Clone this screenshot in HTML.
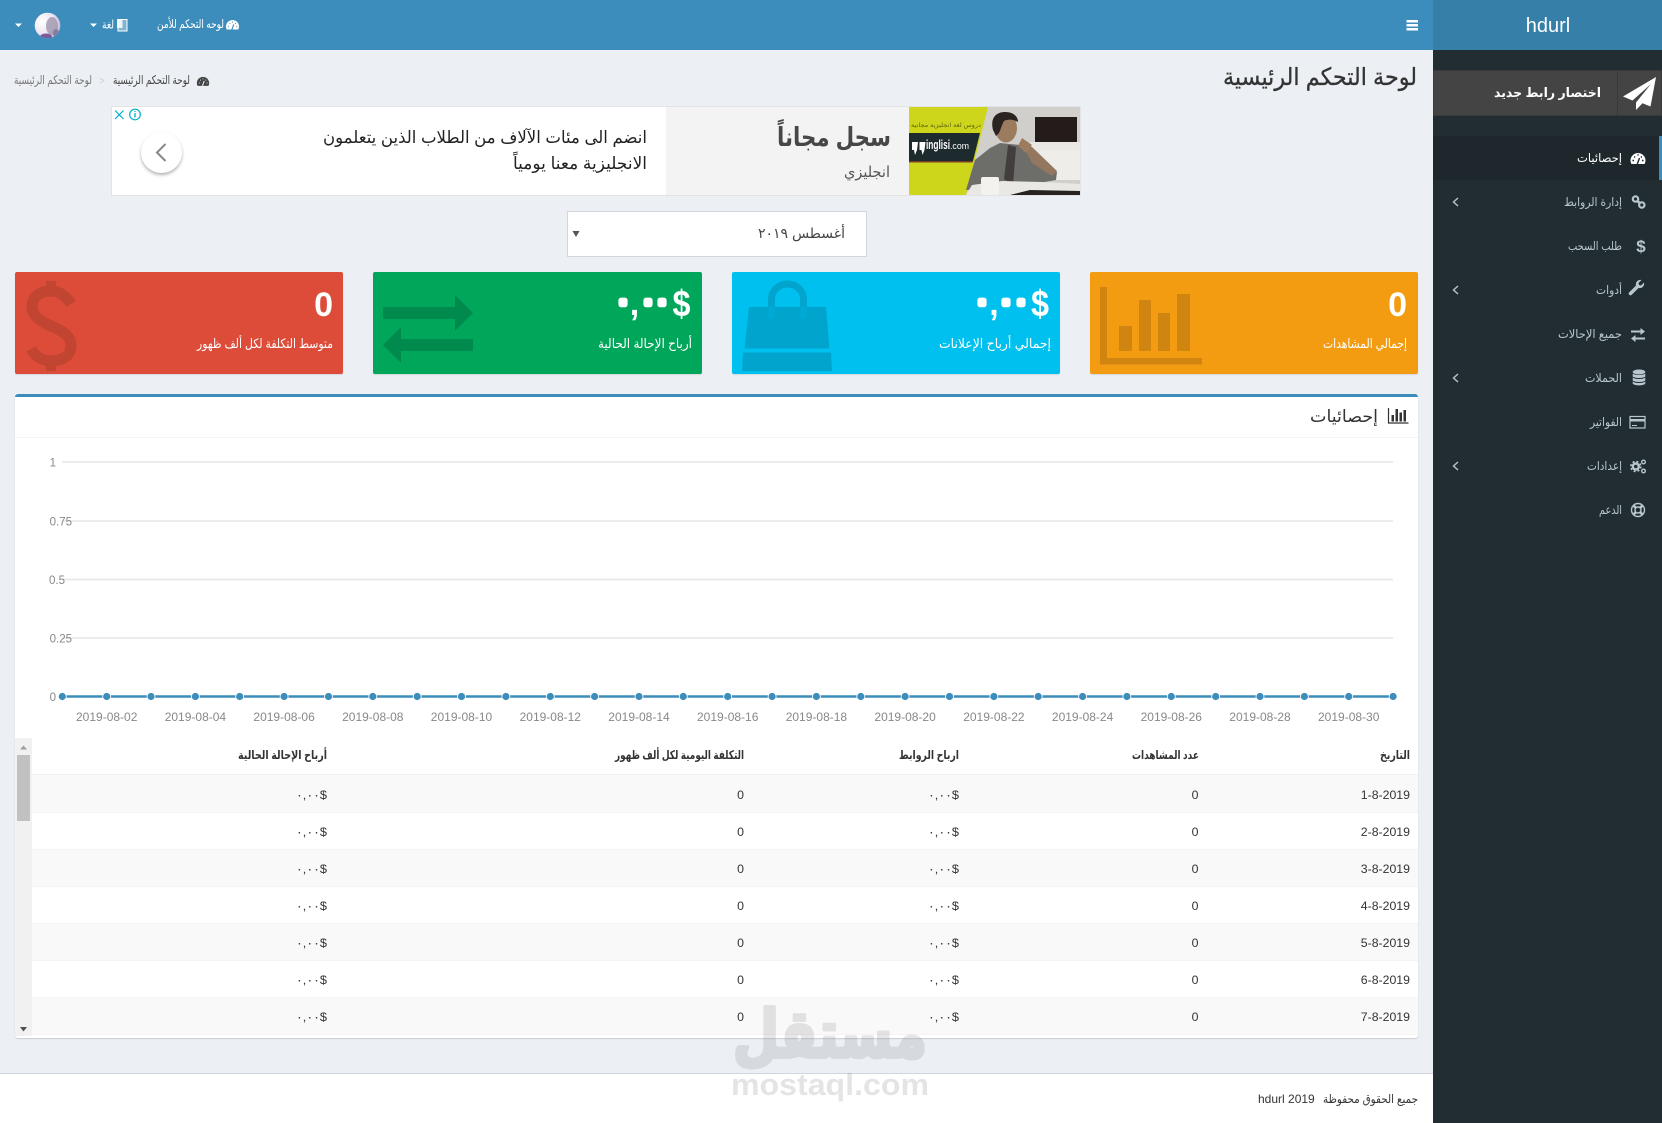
<!DOCTYPE html>
<html lang="ar" dir="ltr">
<head>
<meta charset="utf-8">
<title>hdurl</title>
<style>
html,body{margin:0;padding:0;width:1662px;height:1123px;overflow:hidden;background:#ecf0f5;font-family:"Liberation Sans","DejaVu Sans",sans-serif}
.a{position:absolute;box-sizing:border-box}
svg{position:absolute;left:0;top:0}
</style>
</head>
<body>
<div class="a" style="left:0;top:0;width:1433px;height:50px;background:#3c8dbc"></div>
<div class="a" style="left:1433px;top:0;width:229px;height:50px;background:#367fa9"></div>
<div class="a" style="left:1433px;top:50px;width:229px;height:1073px;background:#222d32"></div>
<div class="a" style="left:1433px;top:70px;width:229px;height:46px;background:#444;border:1px solid #3a3a3a"></div>
<div class="a" style="left:1617px;top:70px;width:1px;height:46px;background:#383838"></div>
<div class="a" style="left:1433px;top:136px;width:229px;height:44px;background:#1e282c;border-right:3px solid #3c8dbc"></div>

<!-- Ad -->
<div class="a" style="left:111px;top:106px;width:970px;height:90px;background:#fff;border:1px solid #e3e3e3"></div>
<div class="a" style="left:666px;top:107px;width:243px;height:88px;background:#f3f3f3"></div>
<div class="a" style="left:141px;top:132px;width:41px;height:41px;border-radius:50%;background:#fff;box-shadow:0 2px 3px rgba(0,0,0,.3)"></div>
<!-- Select -->
<div class="a" style="left:567px;top:211px;width:300px;height:46px;background:#fff;border:1px solid #d2d6de"></div>
<!-- Cards -->
<div class="a" style="left:15px;top:272px;width:328px;height:102px;background:#dd4b39;border-radius:2px;box-shadow:0 1px 1px rgba(0,0,0,.1)"></div>
<div class="a" style="left:373px;top:272px;width:329px;height:102px;background:#00a65a;border-radius:2px;box-shadow:0 1px 1px rgba(0,0,0,.1)"></div>
<div class="a" style="left:732px;top:272px;width:328px;height:102px;background:#00c0ef;border-radius:2px;box-shadow:0 1px 1px rgba(0,0,0,.1)"></div>
<div class="a" style="left:1090px;top:272px;width:328px;height:102px;background:#f39c12;border-radius:2px;box-shadow:0 1px 1px rgba(0,0,0,.1)"></div>
<!-- Box -->
<div class="a" style="left:15px;top:394px;width:1403px;height:644px;background:#fff;border-top:3px solid #3c8dbc;border-radius:3px;box-shadow:0 1px 1px rgba(0,0,0,.15)"></div>
<div class="a" style="left:15px;top:437px;width:1403px;height:1px;background:#f4f4f4"></div>
<!-- Table rows -->
<div class="a" style="left:32px;top:774px;width:1386px;height:38px;background:#f9f9f9;border-top:1px solid #f0f0f0"></div>
<div class="a" style="left:32px;top:812px;width:1386px;height:37px;background:#fff;border-top:1px solid #f4f4f4"></div>
<div class="a" style="left:32px;top:849px;width:1386px;height:37px;background:#f9f9f9;border-top:1px solid #f4f4f4"></div>
<div class="a" style="left:32px;top:886px;width:1386px;height:37px;background:#fff;border-top:1px solid #f4f4f4"></div>
<div class="a" style="left:32px;top:923px;width:1386px;height:37px;background:#f9f9f9;border-top:1px solid #f4f4f4"></div>
<div class="a" style="left:32px;top:960px;width:1386px;height:37px;background:#fff;border-top:1px solid #f4f4f4"></div>
<div class="a" style="left:32px;top:997px;width:1386px;height:38px;background:#f9f9f9;border-top:1px solid #f4f4f4;border-bottom:1px solid #f4f4f4"></div>
<!-- Scrollbar -->
<div class="a" style="left:15px;top:738px;width:17px;height:298px;background:#f1f1f1"></div>
<div class="a" style="left:17px;top:755px;width:13px;height:66px;background:#c1c1c1"></div>
<!-- Footer -->
<div class="a" style="left:0;top:1073px;width:1433px;height:50px;background:#fff;border-top:1px solid #d2d6de"></div>

<svg width="1662" height="1123" viewBox="0 0 1662 1123" font-family="'Liberation Sans','DejaVu Sans',sans-serif">
<!-- Header -->
<path d="M15 23.500h7l-3.500 3.500z" fill="#fff"/>
<defs>
<radialGradient id="av" cx="30%" cy="35%" r="85%"><stop offset="0" stop-color="#fff"/><stop offset=".5" stop-color="#f0e8f4"/><stop offset="1" stop-color="#b5a8c8"/></radialGradient>
<clipPath id="avc"><circle cx="47.500" cy="25.500" r="12.800"/></clipPath>
<g id="gauge"><path d="M-6.630 3.500A7.500 7.500 0 1 1 6.630 3.500Z"/></g>
</defs>
<circle cx="47.500" cy="25.500" r="12.800" fill="url(#av)"/>
<g clip-path="url(#avc)">
<ellipse cx="52" cy="26" rx="6" ry="9" fill="#a29ab0" opacity=".85"/>
<ellipse cx="46" cy="37" rx="6" ry="3.500" fill="#7a5a98"/>
<ellipse cx="56" cy="33" rx="3" ry="4" fill="#8a7ca0"/>
</g>
<path d="M90 23.500h7l-3.500 3.500z" fill="#fff"/>
<text x="102" y="28.500" font-size="12" fill="#fff" textLength="12" lengthAdjust="spacingAndGlyphs">لغة</text>
<rect x="118" y="19.500" width="9" height="11.500" fill="rgba(255,255,255,.35)" stroke="#fff" stroke-width="1"/><rect x="117" y="19" width="5.500" height="9" fill="#fff" opacity=".85"/>
<text x="157" y="28" font-size="12" fill="#fff" textLength="67" lengthAdjust="spacingAndGlyphs">لوحه التحكم للأمن</text>
<g transform="translate(232.500,26.500) scale(.87)"><use href="#gauge" fill="#fff"/><path d="M-.7 3.500L1.500-2.500M-5 0h1M-3.500-3.500h1M-.5-5h1M3-3.500h1M4.500 0h1" stroke="#3c8dbc" stroke-width="1.300" fill="none"/></g>
<path d="M1406.500 20h11.500v2.500h-11.500zM1406.500 24h11.500v2.500h-11.500zM1406.500 28h11.500v2.500h-11.500z" fill="#fff"/>
<text x="1548" y="32" font-size="20" fill="#fff" text-anchor="middle">hdurl</text>
<!-- New-link button -->
<path d="M1656 77L1623 96.500l9.500 4L1651 84l-15 18.500V110l6.500-6.800 8 3.300z" fill="#fff"/>
<text x="1494" y="97" font-size="13" font-weight="bold" fill="#fff" textLength="107" lengthAdjust="spacingAndGlyphs">اختصار رابط جديد</text>

<!-- Sidebar -->
<g transform="translate(1638,160.500)"><use href="#gauge" fill="#fff"/><path d="M-.7 3.500L1.500-2.500M-5.500 0h1.500M-4-3.500h1.200M-.6-5.500h1.200M2.800-3.500H4M4 0h1.500" stroke="#1e282c" stroke-width="1.400" fill="none"/></g>
<text x="1577" y="162" font-size="12" fill="#fff" textLength="45" lengthAdjust="spacingAndGlyphs">إحصائيات</text>

<g fill="none" stroke="#b8c7ce">
<g stroke-width="2.200"><circle cx="1635.500" cy="199" r="2.700"/><circle cx="1641.800" cy="205" r="2.700"/><path d="M1637.500 201l2.300 2.200" stroke-width="2.600"/></g>
<path d="M1458 198l-4.500 4 4.500 4M1458 286l-4.500 4 4.500 4M1458 374l-4.500 4 4.500 4M1458 462l-4.500 4 4.500 4" stroke-width="1.400"/>
<path d="M1644 282.500l-3 3-2-.5-.5-2 3-3a4.500 4.500 0 0 0-5.500 5.500l-7 7a1.800 1.800 0 0 0 2.500 2.500l7-7a4.500 4.500 0 0 0 5.500-5.500z" fill="#b8c7ce" stroke="none"/>
<rect x="1630" y="416.500" width="15" height="11.500" stroke-width="1.200"/>
<circle cx="1638" cy="510" r="6.500" stroke-width="1.400"/>
<circle cx="1638" cy="510" r="3" stroke-width="1.400"/>
<path d="M1633.500 505.500l2.300 2.300M1642.500 505.500l-2.300 2.300M1633.500 514.500l2.300-2.300M1642.500 514.500l-2.300-2.300" stroke-width="2.600"/>
<circle cx="1635.800" cy="466.500" r="3" stroke-width="2.400"/>
<circle cx="1635.800" cy="466.500" r="5" stroke-width="1.600" stroke-dasharray="2 2"/>
<circle cx="1643.500" cy="462" r="1.800" stroke-width="1.400"/>
<circle cx="1643.500" cy="471" r="1.800" stroke-width="1.400"/>
</g>
<text x="1641" y="252" font-size="17" font-weight="bold" fill="#b8c7ce" text-anchor="middle">$</text>
<g fill="#b8c7ce">
<path d="M1631 330.500h9.500V328l4.500 3.500-4.500 3.500v-2.500H1631zM1645 337.500h-9.500V335l-4.500 3.500 4.500 3.500v-2.500h9.500z"/>
<ellipse cx="1639" cy="372" rx="6.300" ry="2.500"/><path d="M1632.700 373.500c1.500 2 11 2 12.600 0v3c-1.500 2-11 2-12.600 0zM1632.700 377.500c1.500 2 11 2 12.600 0v3c-1.500 2-11 2-12.600 0zM1632.700 381.500c1.500 2 11 2 12.600 0v2c-1.500 2.500-11 2.500-12.600 0z"/>
<rect x="1630" y="419" width="15" height="2.500"/><rect x="1632" y="425" width="5" height="1"/>
</g>
<g font-size="12" fill="#b8c7ce">
<text x="1564" y="206" textLength="58" lengthAdjust="spacingAndGlyphs">إدارة الروابط</text>
<text x="1568" y="250" textLength="54" lengthAdjust="spacingAndGlyphs">طلب السحب</text>
<text x="1596" y="294" textLength="26" lengthAdjust="spacingAndGlyphs">أدوات</text>
<text x="1558" y="338" textLength="64" lengthAdjust="spacingAndGlyphs">جميع الإحالات</text>
<text x="1585" y="382" textLength="37" lengthAdjust="spacingAndGlyphs">الحملات</text>
<text x="1590" y="426" textLength="32" lengthAdjust="spacingAndGlyphs">الفواتير</text>
<text x="1587" y="470" textLength="35" lengthAdjust="spacingAndGlyphs">إعدادات</text>
<text x="1599" y="514" textLength="23" lengthAdjust="spacingAndGlyphs">الدعم</text>
</g>

<!-- Title & breadcrumb -->
<text x="1223" y="85" font-size="24" fill="#333" stroke="#333" stroke-width=".3" textLength="194" lengthAdjust="spacingAndGlyphs">لوحة التحكم الرئيسية</text>
<g transform="translate(203,83) scale(.82)"><use href="#gauge" fill="#444"/><path d="M-.7 3.500L1.500-2.500M-5 0h1M-3.500-3.500h1M-.5-5h1M3-3.500h1M4.500 0h1" stroke="#ecf0f5" stroke-width="1.300" fill="none"/></g>
<text x="113" y="84" font-size="12" fill="#444" textLength="77" lengthAdjust="spacingAndGlyphs">لوحة التحكم الرئيسية</text>
<text x="99" y="84" font-size="10" fill="#ccc">&gt;</text>
<text x="14" y="84" font-size="12" fill="#777" textLength="78" lengthAdjust="spacingAndGlyphs">لوحة التحكم الرئيسية</text>

<!-- Ad contents -->
<path d="M115 110.500l8.500 8.500M123.500 110.500l-8.500 8.500" stroke="#00aecd" stroke-width="1.200" fill="none"/>
<circle cx="135" cy="114.500" r="5.300" fill="none" stroke="#00aecd" stroke-width="1.200"/><path d="M135 113v4.500M135 111v1" stroke="#00aecd" stroke-width="1.300"/>
<path d="M165.500 144l-8.500 8.500 8.500 8.500" fill="none" stroke="#888" stroke-width="2"/>
<text x="323" y="143" font-size="17" fill="#222" textLength="324" lengthAdjust="spacingAndGlyphs">انضم الى مئات الآلاف من الطلاب الذين يتعلمون</text>
<text x="513" y="169" font-size="17" fill="#222" textLength="134" lengthAdjust="spacingAndGlyphs">الانجليزية معنا يومياً</text>
<text x="777" y="146" font-size="26" font-weight="bold" fill="#474747" textLength="114" lengthAdjust="spacingAndGlyphs">سجل مجاناً</text>
<text x="844" y="177" font-size="15" fill="#555" textLength="46" lengthAdjust="spacingAndGlyphs">انجليزي</text>
<!-- Ad image -->
<rect x="909" y="107" width="171" height="88" fill="#d0cfcc"/>
<rect x="1035" y="117" width="42" height="25" fill="#231c1a"/>
<rect x="1030" y="142" width="50" height="30" fill="#e9e8e5"/>
<path d="M1040 150h40v30h-40z" fill="#eeede9"/>
<path d="M909 107h79l-22 88h-57z" fill="#cdd61b"/>
<path d="M909 133h71l-7 28h-64z" fill="#1d2a2e"/>
<path d="M909 161h64l-.5 1.500H909z" fill="#7a3a2a"/>
<text x="926" y="149" font-size="13" font-weight="bold" fill="#fff" textLength="24" lengthAdjust="spacingAndGlyphs">inglisi</text>
<text x="950" y="149" font-size="9" fill="#fff" textLength="19" lengthAdjust="spacingAndGlyphs">.com</text>
<path d="M912 142h6l-1 8-2 5-1-5h-2zM919.500 142h6l-1 8-2 5-1-5h-2z" fill="#fff"/>
<text x="911" y="127" font-size="6" fill="#5a6010" textLength="70" lengthAdjust="spacingAndGlyphs">دروس لغة انجليزية مجانية</text>
<path d="M966 190l9-30 15-12 10-5 20 2 12 3 13 17 12 7-1 8-17 3-30 5-20 1z" fill="#6d6d6a"/>
<path d="M1008 145l8 2-3 38-9-6z" fill="#433e3e"/>
<path d="M1022 143l10 4 25 24-5 5-20-13z" fill="#93785f"/>
<ellipse cx="1006" cy="128" rx="11" ry="14.500" fill="#9c7c5e"/>
<path d="M993 130c-3-12 3-18 12-18 8 0 13 4 13 10-5-3-10-3-14-1-2 3-3 8-5 12l-3 3z" fill="#2a2320"/>
<path d="M1018 146l4-8 10 7-6 8z" fill="#9c7c5e"/>
<path d="M966 195l6-10 30-4 40 1 38 2v11z" fill="#e9e8e4"/>
<rect x="981" y="177" width="18" height="18" rx="2" fill="#f3f2ef"/>
<path d="M1010 195l20-5 50 1v4z" fill="#26221f"/>

<!-- Select -->
<text x="758" y="238" font-size="14" fill="#444" textLength="87" lengthAdjust="spacingAndGlyphs">أغسطس ٢٠١٩</text>
<path d="M572.500 231h7l-3.500 6z" fill="#555"/>

<!-- Card bg icons -->
<path d="M71 304C66 296 59 291 51 291 39 291 32 298 32 306 32 316 40 321 51 326 63 331 71 336 71 346 71 355 63 361 51 361 42 361 35 356 31 349" fill="none" stroke="#c14531" stroke-width="11"/>
<path d="M46 281h10v12H46zM46 359h10v12H46z" fill="#c14531"/>
<path d="M383 307h72v-12l18 18-18 18v-12h-72zM473 339h-72v-12l-18 18 18 18v-12h72z" fill="#008a4e"/>
<g fill="#00a4cd"><path d="M749 307h77l3.500 41.500H744.500zM743 352.500h88l1 18.500H742z"/></g>
<path d="M771.500 319V299a16 15 0 0 1 32 0v20" fill="none" stroke="#00a4cd" stroke-width="7"/>
<path d="M771.500 307v11M803.500 307v11" stroke="#00a9d4" stroke-width="7" fill="none"/>
<g fill="#cf850f"><path d="M1100 287h7v71h95v6.500h-102zM1119 326h13v25h-13zM1139 300h12v51h-12zM1158 313h12v38h-12zM1177 294h13v57h-13z"/></g>

<!-- Card text -->
<g font-weight="bold" font-size="34" fill="#fff">
<text x="333" y="316" text-anchor="end">0</text>
<text x="1407" y="316" text-anchor="end">0</text>
<text text-anchor="middle" stroke-linejoin="round"><tspan x="623" y="312" font-weight="normal" stroke="#fff" stroke-width="5.500">٠</tspan><tspan x="634.500" y="315">,</tspan><tspan x="648" y="312" font-weight="normal" stroke="#fff" stroke-width="5.500">٠</tspan><tspan x="662" y="312" font-weight="normal" stroke="#fff" stroke-width="5.500">٠</tspan></text>
<text x="672.500" y="316" font-size="37" textLength="18" lengthAdjust="spacingAndGlyphs">$</text>
<text text-anchor="middle" stroke-linejoin="round"><tspan x="982" y="312" font-weight="normal" stroke="#fff" stroke-width="5.500">٠</tspan><tspan x="994" y="315">,</tspan><tspan x="1006" y="312" font-weight="normal" stroke="#fff" stroke-width="5.500">٠</tspan><tspan x="1021" y="312" font-weight="normal" stroke="#fff" stroke-width="5.500">٠</tspan></text>
<text x="1031" y="316" font-size="37" textLength="18" lengthAdjust="spacingAndGlyphs">$</text>
</g>
<g font-size="13" fill="#fff">
<text x="197" y="348" textLength="136" lengthAdjust="spacingAndGlyphs">متوسط التكلفة لكل ألف ظهور</text>
<text x="598" y="348" textLength="94" lengthAdjust="spacingAndGlyphs">أرباح الإحالة الحالية</text>
<text x="939" y="348" textLength="112" lengthAdjust="spacingAndGlyphs">إجمالي أرباح الإعلانات</text>
<text x="1323" y="348" textLength="84" lengthAdjust="spacingAndGlyphs">إجمالي المشاهدات</text>
</g>

<!-- Box title -->
<path d="M1388.500 408v15h20" fill="none" stroke="#333" stroke-width="1.200"/>
<path d="M1391.500 415h2.500v6.500h-2.500zM1395.500 409h2.500v12.500h-2.500zM1399.500 412.500h2.500v9h-2.500zM1403.500 410h2.500v11.500h-2.500z" fill="#333"/>
<text x="1310" y="422" font-size="17" fill="#333" textLength="68" lengthAdjust="spacingAndGlyphs">إحصائيات</text>

<!-- Chart -->
<g stroke="#e6e6e6" stroke-width="1.500">
<path d="M62 462h1331M62 521h1331M62 579.500h1331M62 638h1331"/>
</g>
<g font-size="11.500" fill="#888" text-anchor="end">
<text x="56" y="466.500">1</text><text x="72" y="525.500">0.75</text><text x="65" y="584">0.5</text><text x="72" y="642.500">0.25</text><text x="56" y="701">0</text>
</g>
<path d="M62.300 696.500H1393" stroke="#3c8dbc" stroke-width="2.400"/>
<g fill="#3c8dbc" stroke="#fff" stroke-width=".8">
<circle cx="62.300" cy="696.500" r="4"/><circle cx="106.700" cy="696.500" r="4"/><circle cx="151" cy="696.500" r="4"/><circle cx="195.400" cy="696.500" r="4"/><circle cx="239.700" cy="696.500" r="4"/><circle cx="284.100" cy="696.500" r="4"/><circle cx="328.500" cy="696.500" r="4"/><circle cx="372.800" cy="696.500" r="4"/><circle cx="417.200" cy="696.500" r="4"/><circle cx="461.500" cy="696.500" r="4"/><circle cx="505.900" cy="696.500" r="4"/><circle cx="550.300" cy="696.500" r="4"/><circle cx="594.600" cy="696.500" r="4"/><circle cx="639" cy="696.500" r="4"/><circle cx="683.300" cy="696.500" r="4"/><circle cx="727.700" cy="696.500" r="4"/><circle cx="772.100" cy="696.500" r="4"/><circle cx="816.400" cy="696.500" r="4"/><circle cx="860.800" cy="696.500" r="4"/><circle cx="905.100" cy="696.500" r="4"/><circle cx="949.500" cy="696.500" r="4"/><circle cx="993.900" cy="696.500" r="4"/><circle cx="1038.200" cy="696.500" r="4"/><circle cx="1082.600" cy="696.500" r="4"/><circle cx="1126.900" cy="696.500" r="4"/><circle cx="1171.300" cy="696.500" r="4"/><circle cx="1215.700" cy="696.500" r="4"/><circle cx="1260" cy="696.500" r="4"/><circle cx="1304.400" cy="696.500" r="4"/><circle cx="1348.700" cy="696.500" r="4"/><circle cx="1393.100" cy="696.500" r="4"/>
</g>
<g font-size="12" fill="#888" text-anchor="middle">
<text x="106.700" y="721">2019-08-02</text><text x="195.400" y="721">2019-08-04</text><text x="284.100" y="721">2019-08-06</text><text x="372.800" y="721">2019-08-08</text><text x="461.500" y="721">2019-08-10</text><text x="550.300" y="721">2019-08-12</text><text x="639" y="721">2019-08-14</text><text x="727.700" y="721">2019-08-16</text><text x="816.400" y="721">2019-08-18</text><text x="905.100" y="721">2019-08-20</text><text x="993.900" y="721">2019-08-22</text><text x="1082.600" y="721">2019-08-24</text><text x="1171.300" y="721">2019-08-26</text><text x="1260" y="721">2019-08-28</text><text x="1348.700" y="721">2019-08-30</text>
</g>

<!-- Scroll arrows -->
<path d="M20 749.500h7l-3.500-4z" fill="#a0a0a0"/>
<path d="M20 1027h7l-3.500 4.500z" fill="#505050"/>

<!-- Table head -->
<g font-size="12" font-weight="bold" fill="#333">
<text x="1380" y="759" textLength="30" lengthAdjust="spacingAndGlyphs">التاريخ</text>
<text x="1132" y="759" textLength="67" lengthAdjust="spacingAndGlyphs">عدد المشاهدات</text>
<text x="899" y="759" textLength="60" lengthAdjust="spacingAndGlyphs">ارباح الروابط</text>
<text x="615" y="759" textLength="129" lengthAdjust="spacingAndGlyphs">التكلفة اليومية لكل ألف ظهور</text>
<text x="238" y="759" textLength="89" lengthAdjust="spacingAndGlyphs">أرباح الإحالة الحالية</text>
</g>
<!-- Table body -->
<g font-size="12.300" fill="#333" text-anchor="end">
<text x="1410" y="799">1-8-2019</text><text x="1198.500" y="799">0</text><text x="744" y="799">0</text>
<text x="1410" y="836">2-8-2019</text><text x="1198.500" y="836">0</text><text x="744" y="836">0</text>
<text x="1410" y="873">3-8-2019</text><text x="1198.500" y="873">0</text><text x="744" y="873">0</text>
<text x="1410" y="910">4-8-2019</text><text x="1198.500" y="910">0</text><text x="744" y="910">0</text>
<text x="1410" y="947">5-8-2019</text><text x="1198.500" y="947">0</text><text x="744" y="947">0</text>
<text x="1410" y="984">6-8-2019</text><text x="1198.500" y="984">0</text><text x="744" y="984">0</text>
<text x="1410" y="1021">7-8-2019</text><text x="1198.500" y="1021">0</text><text x="744" y="1021">0</text>
</g>
<g font-size="12" fill="#333">
<text x="928" y="799" textLength="31" lengthAdjust="spacingAndGlyphs">٠,٠٠$</text><text x="296" y="799" textLength="31" lengthAdjust="spacingAndGlyphs">٠,٠٠$</text>
<text x="928" y="836" textLength="31" lengthAdjust="spacingAndGlyphs">٠,٠٠$</text><text x="296" y="836" textLength="31" lengthAdjust="spacingAndGlyphs">٠,٠٠$</text>
<text x="928" y="873" textLength="31" lengthAdjust="spacingAndGlyphs">٠,٠٠$</text><text x="296" y="873" textLength="31" lengthAdjust="spacingAndGlyphs">٠,٠٠$</text>
<text x="928" y="910" textLength="31" lengthAdjust="spacingAndGlyphs">٠,٠٠$</text><text x="296" y="910" textLength="31" lengthAdjust="spacingAndGlyphs">٠,٠٠$</text>
<text x="928" y="947" textLength="31" lengthAdjust="spacingAndGlyphs">٠,٠٠$</text><text x="296" y="947" textLength="31" lengthAdjust="spacingAndGlyphs">٠,٠٠$</text>
<text x="928" y="984" textLength="31" lengthAdjust="spacingAndGlyphs">٠,٠٠$</text><text x="296" y="984" textLength="31" lengthAdjust="spacingAndGlyphs">٠,٠٠$</text>
<text x="928" y="1021" textLength="31" lengthAdjust="spacingAndGlyphs">٠,٠٠$</text><text x="296" y="1021" textLength="31" lengthAdjust="spacingAndGlyphs">٠,٠٠$</text>
</g>

<!-- Footer -->
<text x="1323" y="1103" font-size="12" fill="#333" textLength="95" lengthAdjust="spacingAndGlyphs">جميع الحقوق محفوظة</text>
<text x="1258" y="1103" font-size="12" fill="#333">hdurl 2019</text>

<!-- Watermark -->
<text x="733" y="1057" font-size="66" font-weight="bold" fill="#6e6e6e" stroke="#6e6e6e" stroke-width="4" stroke-linejoin="round" opacity=".17" textLength="194" lengthAdjust="spacingAndGlyphs">مستقل</text>
<text x="731" y="1095" font-size="31" font-weight="bold" fill="#6e6e6e" opacity=".18" textLength="198" lengthAdjust="spacingAndGlyphs">mostaql.com</text>
</svg>
</body>
</html>
